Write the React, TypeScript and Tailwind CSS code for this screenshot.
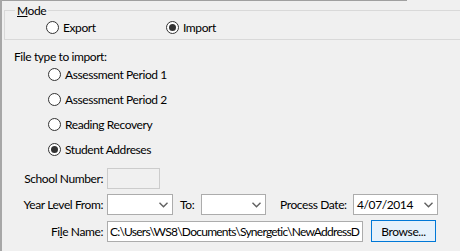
import React from "react";

function Radio({ checked, label }: { checked?: boolean; label: string }) {
  return (
    <div className="flex items-center gap-[4px]">
      <span className="flex h-[13px] w-[13px] shrink-0 items-center justify-center rounded-full border border-[#333333] bg-white">
        {checked && <span className="h-[7px] w-[7px] rounded-full bg-[#333333]" />}
      </span>
      <span className="whitespace-nowrap">{label}</span>
    </div>
  );
}

function Chevron() {
  return (
    <svg width="9" height="6" viewBox="0 0 9 6" className="shrink-0">
      <polyline points="0.5,0.8 4.5,4.8 8.5,0.8" fill="none" stroke="#606060" strokeWidth="1.4" />
    </svg>
  );
}

function Combo({ width, value }: { width: string; value?: string }) {
  return (
    <div className={`flex h-[21px] shrink-0 items-center justify-between border border-[#acacac] bg-white pl-[3px] pr-[4px] ${width}`}>
      <span>{value}</span>
      <Chevron />
    </div>
  );
}

export default function App() {
  return (
    <div className="h-[251px] w-[460px] overflow-hidden bg-[#f0f0f0] text-[12px] leading-[15px] tracking-[-0.4px] text-black [font-family:Lato,'Liberation_Sans',sans-serif]">
      <div className="h-full border-l-2 border-[#a7a7a7]">
        {/* top frame line */}
        <div className="h-px w-[405px] bg-[#a0a0a0]" />

        {/* Mode group */}
        <div className="ml-[2px] mt-[9px] h-[30px] w-[470px] border border-[#d9d9d9]">
          <div className="-mt-[8px] ml-[10px] w-fit bg-[#f0f0f0] px-[2px]">
            <span className="underline">M</span>ode
          </div>
          <div className="ml-[41px] mt-[2px] flex">
            <div className="w-[120px]">
              <Radio label="Export" />
            </div>
            <Radio checked label="Import" />
          </div>
        </div>

        {/* File type */}
        <div className="ml-[12px] mt-[9px]">File type to import:</div>
        <div className="ml-[46px] mt-[3px] flex flex-col gap-[10px]">
          <Radio label="Assessment Period 1" />
          <Radio label="Assessment Period 2" />
          <Radio label="Reading Recovery" />
          <Radio checked label="Student Addreses" />
        </div>

        {/* Form */}
        <div className="mt-[11px] flex flex-col gap-[5px] whitespace-nowrap">
          <div className="flex items-center">
            <div className="w-[101px] shrink-0 text-right">School Number:</div>
            <div className="ml-[4px] h-[21px] w-[53px] border border-[#cccccc] bg-[#f0f0f0]" />
          </div>
          <div className="flex items-center">
            <div className="w-[101px] shrink-0 text-right">Year Level From:</div>
            <div className="ml-[4px]">
              <Combo width="w-[66px]" />
            </div>
            <div className="ml-[7px] w-[21px] shrink-0">To:</div>
            <Combo width="w-[65px]" />
            <div className="ml-[14px] w-[73px] shrink-0">Process Date:</div>
            <Combo width="w-[85px]" value="4/07/2014" />
          </div>
          <div className="flex items-center">
            <div className="w-[101px] shrink-0 text-right">
              Fi<span className="underline">l</span>e Name:
            </div>
            <div className="ml-[4px] flex h-[21px] w-[256px] shrink-0 items-center overflow-hidden border border-[#acacac] bg-white pl-[2px]">
              <span className="whitespace-nowrap tracking-[-0.75px]">C:\Users\WS8\Documents\Synergetic\NewAddressD</span>
            </div>
            <button className="ml-[8px] h-[22px] w-[65px] shrink-0 border border-[#0078d7] bg-[#e5f1fb] text-[12px]">
              Browse...
            </button>
          </div>
        </div>
      </div>
    </div>
  );
}
